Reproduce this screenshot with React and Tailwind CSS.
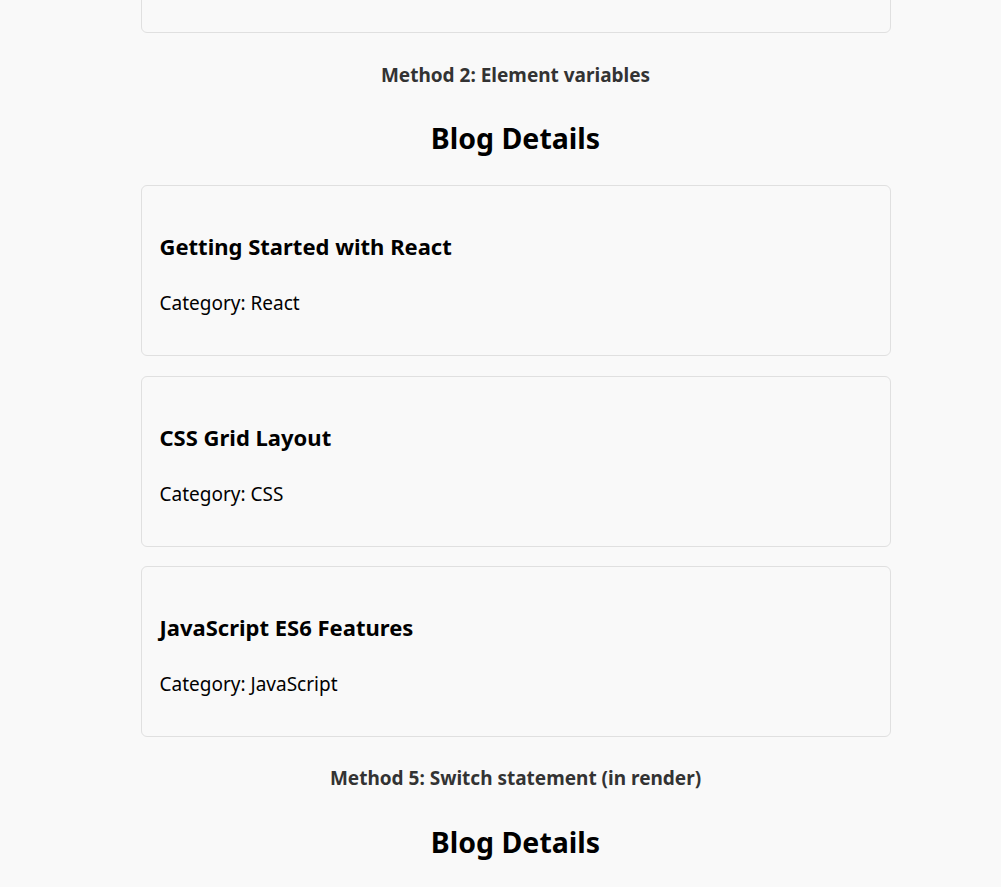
export default function App() {
  const blogs = [
    { title: "Getting Started with React", category: "React" },
    { title: "CSS Grid Layout", category: "CSS" },
    { title: "JavaScript ES6 Features", category: "JavaScript" },
  ];
  const font = { fontFamily: '"Noto Sans", "Open Sans", sans-serif' };
  return (
    <div className="min-h-[887px] bg-[#f9f9f9] overflow-hidden" style={font}>
      <div className="flex justify-center pl-[30px]">
        <div className="w-[750px] flex flex-col">
          <div className="h-[171px] mt-[-138px] border border-[#e0e0e0] rounded-md" />
          <p className="mt-[30px] text-center text-[19px] leading-[24px] font-bold text-[#333]">
            Method 2: Element variables
          </p>
          <h2 className="mt-[33px] text-center text-[28.5px] leading-[36px] font-bold text-black">
            Blog Details
          </h2>
          <div className="mt-[29px] flex flex-col gap-[19.5px]">
            {blogs.map((b) => (
              <div
                key={b.title}
                className="h-[171px] border border-[#e0e0e0] rounded-md px-[18px] pt-[46px]"
              >
                <h3 className="text-[22px] leading-[28px] font-bold text-black">{b.title}</h3>
                <p className="mt-[31px] text-[19px] leading-[24px] text-black">
                  Category: {b.category}
                </p>
              </div>
            ))}
          </div>
          <p className="mt-[29px] text-center text-[19px] leading-[24px] font-bold text-[#333]">
            Method 5: Switch statement (in render)
          </p>
          <h2 className="mt-[34px] text-center text-[28.5px] leading-[36px] font-bold text-black">
            Blog Details
          </h2>
        </div>
      </div>
    </div>
  );
}
